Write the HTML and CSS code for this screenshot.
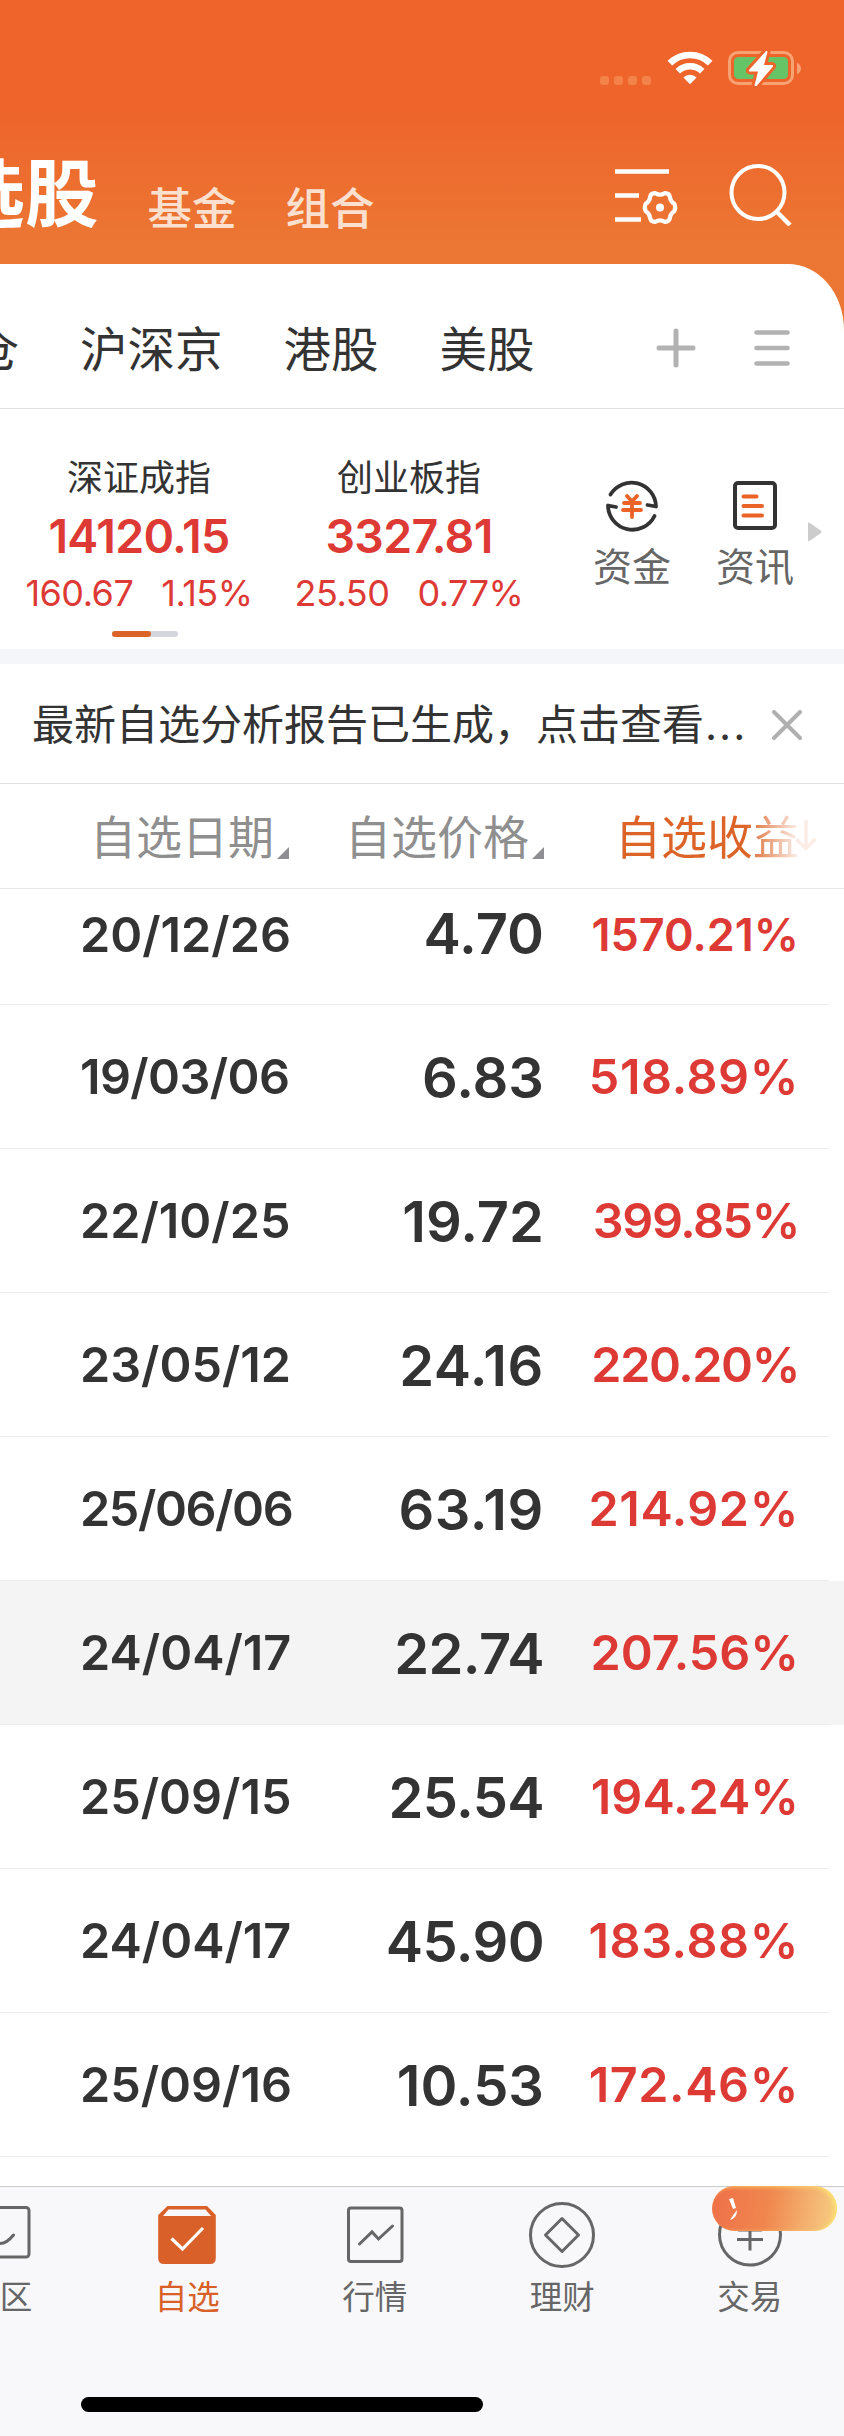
FILE: index.html
```
<!DOCTYPE html>
<html lang="zh-CN">
<head>
  <meta charset="utf-8" />
  <title>自选股</title>
  <meta name="viewport" content="width=device-width, initial-scale=1" />
  <link rel="stylesheet" href="styles.css">
</head>

<body>
  <div class="app">
    <header class="header">
      <div class="status-bar">
        <svg class="signal" width="52" height="10" viewBox="0 0 52 10" fill="#f38349">
          <rect x="0" y="0" width="9" height="9" rx="3" />
          <rect x="14" y="0" width="9" height="9" rx="3" />
          <rect x="28" y="0" width="9" height="9" rx="3" />
          <rect x="42" y="0" width="9" height="9" rx="3" />
        </svg>
        <svg class="wifi" width="46" height="34" viewBox="0 0 46 34" fill="none" stroke="#fff">
          <path d="M2.8 12.2 A29 29 0 0 1 43.2 12.2" stroke-width="6.6" />
          <path d="M10.8 20.2 A17.6 17.6 0 0 1 35.2 20.2" stroke-width="6.4" />
          <path d="M16.4 26.4 A9.4 9.4 0 0 1 29.6 26.4 L23.8 32.4 Q23 33.2 22.2 32.4 Z" fill="#fff" stroke="none" />
        </svg>
        <svg class="battery" width="74" height="38" viewBox="0 0 74 38">
          <rect x="1.5" y="3.5" width="63" height="31" rx="8.5" fill="none" stroke="#f7a273" stroke-width="3" />
          <rect x="6" y="8" width="54" height="22" rx="4.5" fill="#67c466" />
          <path d="M69 13.5 Q73 16 73 19.5 Q73 23 69 25.5 Z" fill="#f7a273" />
          <path d="M38 2 L21 21 Q20.500 22.5 22 22.500 L30 22.500 L26.500 36.500 Q27.500 37.500 29 36.500 L45 17.500 Q45.500 16 44 16 L36 16 L39.500 3 Q39.500 1.500 38 2 Z" fill="#fff" stroke="#ee642b" stroke-width="6" paint-order="stroke" />
        </svg>
      </div>
      <div class="nav">
        <div class="nav-tabs">
          <h1>自选股</h1>
          <span class="nav-tab nav-fund">基金</span>
          <span class="nav-tab">组合</span>
        </div>
        <div class="nav-tools">
          <svg width="64" height="64" viewBox="0 0 64 64" fill="none" stroke="#fff">
            <path d="M0 9.500H54 M0 33.500H24 M0 57.500H26" stroke-width="4.500" />
            <path d="M40.500 31.200 Q45 34.200 49.500 31.200 Q54.500 31 55 35.500 Q55.500 39.500 59.500 42 Q61 45.500 59.500 49 Q55.500 51.500 55 55.500 Q54.500 60 49.500 59.800 Q45 56.800 40.500 59.800 Q35.500 60 35 55.500 Q34.500 51.500 30.500 49 Q29 45.500 30.500 42 Q34.500 39.500 35 35.500 Q35.500 31 40.500 31.200 Z" stroke-width="4.200" stroke-linejoin="round" />
            <circle cx="45" cy="45.500" r="4" fill="#fff" stroke="none" />
          </svg>
          <svg width="64" height="64" viewBox="0 0 64 64" fill="none" stroke="#fff" stroke-width="4">
            <circle cx="29" cy="30.500" r="26.500" />
            <path d="M47.500 49.500 L61 63" stroke-width="4.500" />
          </svg>
        </div>
      </div>
    </header>

    <main class="sheet">
      <div class="markets">
        <div class="market-list">
          <span>持仓</span>
          <span>沪深京</span>
          <span>港股</span>
          <span>美股</span>
        </div>
        <svg class="add" width="40" height="40" viewBox="0 0 40 40" stroke="#b2b2b2" stroke-width="5" stroke-linecap="round">
          <path d="M3 20H37 M20 3V37" />
        </svg>
        <svg width="36" height="36" viewBox="0 0 36 36" stroke="#b2b2b2" stroke-width="4.600" stroke-linecap="round">
          <path d="M2.500 2.500H33.500 M2.500 18H33.500 M2.500 33.500H33.500" />
        </svg>
      </div>

      <section class="indexes">
        <div class="index-card">
          <div class="index-name">深证成指</div>
          <div class="index-value">14120.15</div>
          <div class="index-change"><span>160.67</span><span>1.15%</span></div>
          <div class="pager"><i></i></div>
        </div>
        <div class="index-card">
          <div class="index-name">创业板指</div>
          <div class="index-value">3327.81</div>
          <div class="index-change"><span>25.50</span><span>0.77%</span></div>
        </div>
        <div class="shortcuts">
          <div class="shortcut">
            <svg width="54" height="54" viewBox="0 0 54 54" fill="none" stroke="#333" stroke-width="3.800" stroke-linecap="round" stroke-linejoin="round">
              <path d="M5.500 16.500 A24.500 24.500 0 0 1 51 28.500 L42.500 27" />
              <path d="M49.500 38 A24.500 24.500 0 0 1 3 27.500 L11 29" />
              <path d="M22 18 L27 23.500 L32 18 M19 25H35 M18 32H36 M27 24V39" stroke="#ec6327" />
            </svg>
            <span>资金</span>
          </div>
          <div class="shortcut">
            <svg width="54" height="54" viewBox="0 0 54 54" fill="none" stroke="#333" stroke-width="4" stroke-linecap="round">
              <rect x="7" y="5" width="40" height="45" rx="3" />
              <path d="M15.500 18.500H28.500 M15.500 28H34 M15.500 37.500H34" stroke="#ec6327" />
            </svg>
            <span>资讯</span>
          </div>
        </div>
        <svg class="more" width="14" height="20" viewBox="0 0 14 20">
          <path d="M0 1.500 Q0 0 1.500 0.800 L13 8.800 Q14 10 13 11 L1.500 19 Q0 19.500 0 18 Z" fill="#ccc" />
        </svg>
      </section>

      <div class="notice">
        <span>最新自选分析报告已生成，点击查看<span class="dots">...</span></span>
        <svg width="30" height="30" viewBox="0 0 30 30" stroke="#b0b0b0" stroke-width="4" stroke-linecap="round">
          <path d="M2 2L28 28 M28 2L2 28" />
        </svg>
      </div>

      <div class="table-head">
        <span class="th th-date">自选日期<i></i></span>
        <span class="th th-price">自选价格<i></i></span>
        <span class="th th-profit">自选收益<svg width="22" height="32" viewBox="0 0 22 32" fill="none" stroke="#dc6428" stroke-width="3.500"><path d="M11 0V28 M1.500 19L11 28.500L20.500 19" /></svg></span>
      </div>

      <div class="table">
        <div class="row row-first"><span class="date">20/12/26</span><span class="price">4.70</span><span class="profit small">1570.21%</span></div>
        <div class="row"><span class="date snug">19/03/06</span><span class="price">6.83</span><span class="profit loose">518.89%</span></div>
        <div class="row"><span class="date">22/10/25</span><span class="price">19.72</span><span class="profit tight">399.85%</span></div>
        <div class="row"><span class="date">23/05/12</span><span class="price loose">24.16</span><span class="profit tight">220.20%</span></div>
        <div class="row"><span class="date tight">25/06/06</span><span class="price loose">63.19</span><span class="profit loose">214.92%</span></div>
        <div class="row active"><span class="date">24/04/17</span><span class="price snug">22.74</span><span class="profit">207.56%</span></div>
        <div class="row"><span class="date">25/09/15</span><span class="price snug">25.54</span><span class="profit">194.24%</span></div>
        <div class="row"><span class="date">24/04/17</span><span class="price snug">45.90</span><span class="profit loose">183.88%</span></div>
        <div class="row"><span class="date">25/09/16</span><span class="price">10.53</span><span class="profit loose">172.46%</span></div>
      </div>
    </main>

    <footer class="tab-bar">
      <div class="tabs">
        <div class="tab">
          <svg width="68" height="68" viewBox="0 0 68 68" fill="none" stroke="#666" stroke-width="3" stroke-linecap="round">
            <rect x="5" y="7.500" width="58" height="49.500" rx="3" />
            <path d="M20 35 Q34 52 47.500 35" />
          </svg>
          <span>社区</span>
        </div>
        <div class="tab selected">
          <svg width="68" height="68" viewBox="0 0 68 68">
            <path d="M14.500 6 H54 L62.800 15 V58 Q62.800 64 57 64 H11 Q5.200 64 5.200 58 V15 Z" fill="#d96028" />
            <path d="M15.500 9.500 H52.500 L58 16 H10 Z" fill="#f8f8fa" />
            <path d="M18.500 38.500 L29.500 49 L50 28" fill="none" stroke="#fff" stroke-width="3.200" />
          </svg>
          <span>自选</span>
        </div>
        <div class="tab">
          <svg width="68" height="68" viewBox="0 0 68 68" fill="none" stroke="#666" stroke-width="3" stroke-linecap="round">
            <rect x="7.500" y="8" width="53.500" height="53.500" rx="2.500" />
            <path d="M18.500 44 L31 32 L37.500 39 L51.500 26" />
          </svg>
          <span>行情</span>
        </div>
        <div class="tab">
          <svg width="68" height="68" viewBox="0 0 68 68" fill="none" stroke="#666" stroke-width="3" stroke-linejoin="round">
            <circle cx="34" cy="35" r="31.500" />
            <path d="M34 18.500 L50.500 35 L34 51.500 L17.500 35 Z" />
          </svg>
          <span>理财</span>
        </div>
        <div class="tab">
          <svg width="68" height="68" viewBox="0 0 68 68" fill="none" stroke="#666" stroke-width="3">
            <circle cx="34" cy="34.500" r="30.500" />
            <path d="M21 39.500H47 M34 24V50.500 M22 30H46" />
          </svg>
          <span>交易</span>
          <div class="badge">
            <svg width="10" height="24" viewBox="0 0 10 24" fill="#fff">
              <path d="M0 1 L4 0 L7 10 L4 11 Z M8 12 Q8 20 1 22 L5 16 Z" />
            </svg>
          </div>
        </div>
      </div>
      <div class="home-indicator"></div>
    </footer>
  </div>
</body>
</html>
```

FILE: styles.css
```
* {
  box-sizing: border-box;
  padding: 0;
  margin: 0;
}

body {
  font-family: Inter, "Noto Sans CJK SC", sans-serif;
  color: #333;
  background: #fff;
}

svg {
  display: block;
  flex-shrink: 0;
}

.app {
  width: 844px;
  height: 2436px;
  overflow: hidden;
  display: flex;
  flex-direction: column;
}

/* 顶部 */
.header {
  height: 330px;
  flex-shrink: 0;
  background: linear-gradient(#ee642b 0, #ee642b 110px, #ec7533 230px, #eb7834 330px);
}

.status-bar {
  height: 132px;
  padding: 50px 42px 0 0;
  display: flex;
  justify-content: flex-end;
}

.signal {
  margin: 26px 15px 0 0;
}

.wifi {
  margin: 1px 15px 0 0;
}

.battery {
  margin-top: -1px;
}

.nav {
  display: flex;
  justify-content: space-between;
  padding-right: 51px;
  white-space: nowrap;
}

.nav-tabs {
  display: flex;
  align-items: baseline;
  margin: 10px 0 0 -122px;
  color: #fff;
}

h1 {
  font-size: 73.500px;
  line-height: 106px;
  font-weight: 700;
}

.nav-tab {
  position: relative;
  top: 4px;
  font-size: 44.5px;
  font-weight: 500;
  color: #fbe0d0;
  margin-left: 49px;
}

.nav-tools {
  display: flex;
  gap: 50px;
  margin-top: 30px;
}

/* 白色内容区 */
.sheet {
  flex: 1;
  margin-top: -66px;
  background: #fff;
  border-top-right-radius: 56px 66px;
  overflow: hidden;
}

.markets {
  height: 145px;
  padding: 24px 54px 0 0;
  border-bottom: 1px solid #e2e2e2;
  display: flex;
  align-items: center;
}

.market-list {
  flex: 1;
  display: flex;
  gap: 61px;
  margin-left: -76px;
  padding-top: 4px;
  font-size: 47.500px;
  line-height: 70px;
  white-space: nowrap;
}

.add {
  margin-right: 58px;
}

.indexes {
  height: 240px;
  padding-left: 4px;
  display: flex;
  align-items: flex-start;
}

.index-card {
  width: 270px;
  padding-top: 43px;
  display: flex;
  flex-direction: column;
  align-items: center;
  color: #de3a35;
}

.index-name {
  font-size: 36px;
  line-height: 52px;
  color: #333;
}

.index-value {
  font-size: 46.500px;
  font-weight: 600;
  line-height: 64px;
  letter-spacing: -0.7px;
}

.index-change {
  display: flex;
  gap: 28px;
  font-size: 36px;
  line-height: 50px;
  letter-spacing: -0.5px;
}

.pager {
  width: 66px;
  height: 6px;
  margin: 13px 0 0 12px;
  border-radius: 3px;
  background: #d5d5dd;
}

.pager i {
  display: block;
  width: 39px;
  height: 6px;
  border-radius: 3px;
  background: #dc6428;
}

.shortcuts {
  display: flex;
  gap: 45px;
  margin-left: 49px;
  padding-top: 69px;
}

.shortcut {
  width: 78px;
  display: flex;
  flex-direction: column;
  align-items: center;
  font-size: 39px;
  line-height: 58px;
  color: #666;
}

.shortcut span {
  margin-top: 6px;
}

.more {
  margin: 113px 0 0 14px;
}

.notice {
  height: 135px;
  border-top: 15px solid #f5f6f9;
  border-bottom: 1px solid #e2e2e2;
  padding: 2px 42px 0 32px;
  display: flex;
  align-items: center;
  justify-content: space-between;
  font-size: 42px;
  line-height: 60px;
  white-space: nowrap;
}

.dots {
  margin-left: 1px;
  letter-spacing: 2px;
}

.table-head {
  height: 105px;
  border-bottom: 1px solid #e8e8e8;
  display: flex;
  padding-left: 90px;
  font-size: 46px;
  line-height: 106px;
  color: #8f8f8f;
  white-space: nowrap;
}

.th {
  display: flex;
}

.th i {
  border: 6px solid transparent;
  border-right-color: #8e8e93;
  border-bottom-color: #8e8e93;
  width: 12px;
  height: 12px;
  margin: 63px 0 0 3px;
}

.th-date,
.th-price {
  width: 255px;
}

.th-profit {
  margin-left: 15px;
  color: #dc6428;
  -webkit-mask-image: linear-gradient(to right, #000 130px, rgba(0, 0, 0, 0.12) 182px);
  mask-image: linear-gradient(to right, #000 130px, rgba(0, 0, 0, 0.12) 182px);
}

.th-profit svg {
  margin: 36px 0 0 -4px;
}

/* 列表 */
.row {
  height: 144px;
  display: grid;
  grid-template-columns: 80px 250px 214px 255px;
  align-items: center;
  font-weight: 600;
  line-height: 1;
  background: linear-gradient(#ececec, #ececec) 0 100% / 829px 1px no-repeat;
}

.row > span {
  padding-top: 1px;
}

.row-first {
  height: 116px;
  align-items: start;
}

.row.active {
  background-color: #f4f4f4;
}

.date {
  grid-column: 2;
  font-size: 48.500px;
}

.price {
  grid-column: 3;
  text-align: right;
  font-size: 56px;
}

.profit {
  grid-column: 4;
  text-align: right;
  font-size: 48.500px;
  color: #de3a35;
}

.profit.small {
  font-size: 45px;
}

/* 数字宽度微调 */
.tight {
  letter-spacing: -1.4px;
}

.snug {
  letter-spacing: -0.6px;
}

.loose {
  letter-spacing: 0.6px;
}

.row-first > span {
  line-height: 89px;
}

/* 底部导航 */
.tab-bar {
  height: 250px;
  flex-shrink: 0;
  border-top: 1px solid #ccc;
  background: #f8f8fa;
}

.tabs {
  display: grid;
  grid-template-columns: repeat(5, 187.500px);
  margin-left: -94px;
  height: 210px;
}

.tab {
  position: relative;
  display: flex;
  flex-direction: column;
  align-items: center;
  padding-top: 13px;
  font-size: 32.500px;
  line-height: 48px;
  color: #666;
}

.tab span {
  margin-top: 6px;
}

.selected {
  color: #d96028;
}

.badge {
  position: absolute;
  top: -1px;
  left: 56px;
  width: 125px;
  height: 45px;
  border-radius: 23px;
  padding: 12px 0 0 17px;
  background: linear-gradient(100deg, #ef6f48, #f0874f 45%, #f5bd78 85%, #f8cf7c);
  box-shadow: inset -3px 1px 4px rgba(255, 235, 110, 0.7);
}

.home-indicator {
  width: 402px;
  height: 15px;
  margin-left: 81px;
  border-radius: 8px;
  background: #000;
}
```
